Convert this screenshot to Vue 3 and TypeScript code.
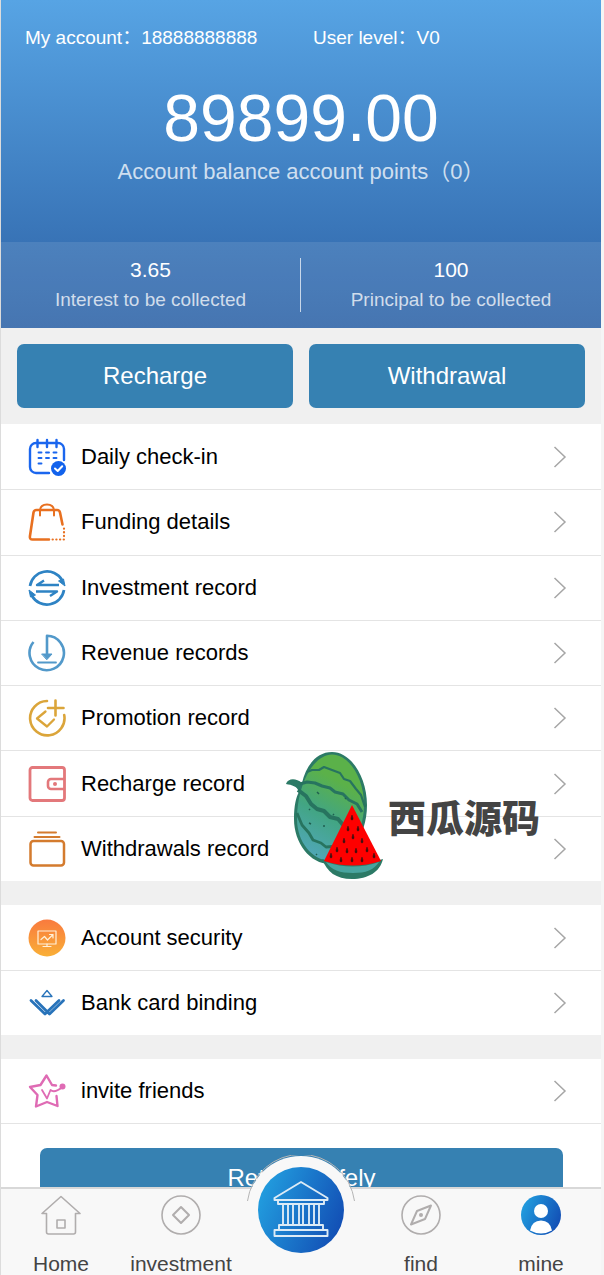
<script setup lang="ts">
interface MenuItem {
  id: string
  label: string
}

const stats = [
  { label: 'Interest to be collected', value: '3.65' },
  { label: 'Principal to be collected', value: '100' },
]

const groups: MenuItem[][] = [
  [
    { id: 'checkin', label: 'Daily check-in' },
    { id: 'funding', label: 'Funding details' },
    { id: 'investment', label: 'Investment record' },
    { id: 'revenue', label: 'Revenue records' },
    { id: 'promotion', label: 'Promotion record' },
    { id: 'recharge', label: 'Recharge record' },
    { id: 'withdrawals', label: 'Withdrawals record' },
  ],
  [
    { id: 'security', label: 'Account security' },
    { id: 'bank', label: 'Bank card binding' },
  ],
  [{ id: 'invite', label: 'invite friends' }],
]

const seeds = [
  [67, 67], [63, 78], [73, 78], [59, 90], [68, 86], [77, 90],
  [52, 99], [62, 100], [71, 100], [82, 99],
  [46, 105], [56, 109], [67, 109], [77, 109], [89, 105],
]
</script>

<template>
  <div class="app">
    <main class="scroll">
      <header class="hero">
        <div class="account">
          <span>My account：18888888888</span>
          <span>User level：V0</span>
        </div>
        <div class="balance">89899.00</div>
        <div class="caption">Account balance account points（0）</div>
        <div class="stats">
          <div v-for="s in stats" :key="s.label" class="stat">
            <strong>{{ s.value }}</strong>
            <span>{{ s.label }}</span>
          </div>
        </div>
      </header>

      <div class="actions">
        <button type="button" class="primary">Recharge</button>
        <button type="button" class="primary">Withdrawal</button>
      </div>

      <div class="menus">
        <nav v-for="(group, gi) in groups" :key="gi" class="menu" :class="'menu-' + gi">
          <a v-for="item in group" :key="item.id" href="#" class="row">
            <svg class="icon" viewBox="0 0 38 38" fill="none" stroke-linecap="round" stroke-linejoin="round">
              <g v-if="item.id === 'checkin'" stroke="#1b66ee" stroke-width="2.400">
                <path d="M21 35H8a6 6 0 0 1-6-6V11a6 6 0 0 1 6-6h22a6 6 0 0 1 6 6v11" />
                <path d="M9.500 2v7M19 2v7M28.500 2v7" />
                <path d="M10.500 14.500h3M18 14.500h3M25.500 14.500h3M10.500 20h3M18 20h3M25.500 20h3M10.500 25.500h3" stroke-width="1.900" />
                <circle cx="30.500" cy="30.500" r="7.500" fill="#1262ec" stroke="none" />
                <path d="M27 30.500l2.700 2.500 4.500-4.800" stroke="#fff" stroke-width="2" />
              </g>
              <g v-else-if="item.id === 'funding'" stroke="#e87020" stroke-width="2.600">
                <path d="M21 36.500H4.500q-3 0-2.600-3L5.500 9.500Q6 7 8.500 7h20.500q2.500 0 3 2.500l2.500 12" />
                <path d="M12 12.500V8q0-6.500 7-6.500T26 8v4.500" stroke-width="2" />
                <path d="M36 25.500v11H23.500" stroke-width="2.200" stroke-dasharray="0.200 3.500" />
              </g>
              <g v-else-if="item.id === 'investment'" stroke="#2e83c4" stroke-width="2.700" stroke-linecap="butt">
                <path d="M2 17A17.300 17.300 0 0 1 34 11M36 21A17.300 17.300 0 0 1 4 27" />
                <path d="M37 17l-6.500-5 5-2zM1 21l6.500 5-5 2z" fill="#2e83c4" stroke-width="1" />
                <path d="M31 16H9l7-4.500M8 22.500h21l-7 4.500" stroke-width="2.400" />
              </g>
              <g v-else-if="item.id === 'revenue'" stroke="#5299ca" stroke-width="2.600">
                <path d="M5.500 8A17.200 17.200 0 1 0 19 1.800V23" stroke-linecap="butt" />
                <path d="M14 20h10l-5 5.500z" fill="#5299ca" stroke-width="1" />
                <path d="M10 28.500h18" stroke-width="1.800" />
              </g>
              <g v-else-if="item.id === 'promotion'" stroke="#dba53a" stroke-width="2.600">
                <path d="M19 2A17.200 17.200 0 1 0 36.200 16" />
                <path d="M27.500 1.500v15M20 9h15.500" stroke-width="2.600" />
                <path d="M17.500 12.500L9 19.500l10 8 7-7" stroke-width="2.300" />
              </g>
              <g v-else-if="item.id === 'recharge'" stroke="#e3787b" stroke-width="2.800">
                <rect x="2" y="2.500" width="34.500" height="33" rx="2.500" />
                <path d="M36 14H23a3 3 0 0 0-3 3v4a3 3 0 0 0 3 3h13" stroke-width="2.600" />
                <circle cx="27" cy="19" r="2" fill="#e3787b" stroke="none" />
              </g>
              <g v-else-if="item.id === 'withdrawals'" stroke="#d47b2e" stroke-width="2">
                <rect x="2.500" y="11" width="33.500" height="24.500" rx="3" stroke-width="2.500" />
                <path d="M10 2.500h18M6.500 7h25" />
              </g>
              <g v-else-if="item.id === 'security'">
                <defs>
                  <linearGradient id="sun" x1="0" y1="0" x2="0" y2="1">
                    <stop offset="0" stop-color="#f97a3e" />
                    <stop offset="1" stop-color="#f9af37" />
                  </linearGradient>
                </defs>
                <circle cx="19" cy="19" r="18.500" fill="url(#sun)" />
                <g stroke="#fff0d9" stroke-width="1.200">
                  <rect x="10" y="12" width="18" height="13" />
                  <path d="M19 25v2.500M15 27.500h8M13 20.500l3.500-3 3 3.500 5.500-5.500M21.500 15.500H25V19" />
                </g>
              </g>
              <g v-else-if="item.id === 'bank'" stroke="#2873ba" stroke-width="2.800">
                <path d="M19 6.500l5 6H14z" stroke-width="1.300" />
                <path d="M3 16.500L17 30 31 16.500M8 16.500L21.500 30 35.500 16.500" />
              </g>
              <g v-else stroke="#df6bb4" stroke-width="2.400">
                <path d="M28.500 24l1 10L19 30 8 34.500 9.500 23 2 15l10.500-2L18.500 3.500l5.500 9.500 4 .5" />
                <path d="M14 18l5 8.500 3.500-8.500q4 3.500 12-3" stroke-width="1.800" />
                <circle cx="34.500" cy="14.500" r="3" fill="#df6bb4" stroke="none" />
              </g>
            </svg>
            <span class="label">{{ item.label }}</span>
            <svg class="chevron" viewBox="0 0 14 24" fill="none" stroke="#a6a6a6" stroke-width="1.500">
              <path d="M1.500 2L12 12 1.500 22" />
            </svg>
          </a>
        </nav>

        <div class="badge">
          <svg class="melon" viewBox="0 0 98 128">
            <defs>
              <linearGradient id="rind" x1="0.700" y1="0" x2="0.350" y2="1">
                <stop offset="0.250" stop-color="#5bb149" />
                <stop offset="0.600" stop-color="#42a583" />
                <stop offset="1" stop-color="#50a7b8" />
              </linearGradient>
            </defs>
            <path d="M47 1C66 1 82 26 82 54c0 32-20 58-37 59C25 113 9 92 9 68c0-13 2-22 5-27C12 35 7 34 1 33c2-6 10-6 16-1C21 15 31 1 47 1z" fill="#2c7a66" />
            <path d="M47 3.500C64 3.500 79 27 79 54c0 30-19 55-34 56C27 109 12 91 12 68 12 36 27 4 47 3.500z" fill="url(#rind)" />
            <g fill="none" stroke="#27745f" stroke-width="2.200" stroke-linejoin="round">
              <path d="M22 21l5-2 7 0 5-3 8 3 8 3 4 6 6 2 6 8 5 6 4 12" />
              <path d="M15 33l7-2 8 1 7 3 8 2 5 4 8 2 6 6 8 4 5 8" stroke-width="3" />
              <path d="M13 39l8 6 5 8 6 5 7 2 6 6 8 2 6 7" stroke-width="4" />
              <path d="M12 62l5 12 7 8 4 7 8 3 5 4 14-1" stroke-width="2.800" />
            </g>
            <path d="M32 41l2 2M48 63l1 1M24 58l1 1M38 75l2 0M24 72l2 1M60 47l1 1M31 103l1 1" stroke="#1f5f50" stroke-width="1.500" />
            <path d="M37 108q30 10 61 0c-3 13-15 20-31 20S42 121 37 108z" fill="#2c7a66" />
            <path d="M41 111q27 9 53 0c-5 8-13 11-26 11s-22-3-27-11z" fill="#49a49f" />
            <path d="M67 54l29 56q-28 9-57 0z" fill="#fe0000" />
            <path v-for="(s, i) in seeds" :key="i" :d="`M${s[0]} ${s[1] - 3}q-2 5 0 5t0-5z`" fill="#3a1010" stroke="#3a1010" stroke-width="0.500" />
          </svg>
          <span>西瓜源码</span>
        </div>
      </div>

      <div class="exit">
        <button type="button" class="primary">Retreat safely</button>
      </div>
    </main>

    <nav class="tabs">
      <a href="#" class="tab">
        <svg viewBox="0 0 40 40" fill="none" stroke="#b0adad" stroke-width="1.600" stroke-linejoin="round">
          <path d="M20 1.500L39 18.500H34.500V37a2 2 0 0 1-2 2h-25a2 2 0 0 1-2-2V18.500H1zM16 25h8v8h-8z" />
        </svg>
        <span>Home</span>
      </a>
      <a href="#" class="tab">
        <svg viewBox="0 0 40 40" fill="none" stroke="#b0adad" stroke-width="1.600" stroke-linejoin="round">
          <circle cx="20" cy="20" r="19" />
          <path d="M20 12l8 8-8 8-8-8z" stroke-width="2" />
        </svg>
        <span>investment</span>
      </a>
      <a href="#" class="tab" aria-label="Bank">
        <svg class="hub" viewBox="0 0 110 110" fill="none">
          <defs>
            <linearGradient id="sea" x1="0" y1="0.300" x2="1" y2="0.700">
              <stop offset="0" stop-color="#229edf" />
              <stop offset="1" stop-color="#124db4" />
            </linearGradient>
          </defs>
          <circle cx="55" cy="55" r="54" fill="#f8f8f8" />
          <path d="M1.500 46A54 54 0 0 1 108.500 46" stroke="#b5b5b5" />
          <circle cx="55" cy="55" r="43" fill="url(#sea)" />
          <g stroke="#dcebf6" stroke-width="1.900" stroke-linejoin="round">
            <path d="M55 27L28.500 43v2h53v-2zM32 45v4h46v-4M37 49v21M42 49v21M47 49v21M53 49v21M57 49v21M63 49v21M68 49v21M73 49v21" />
            <path d="M33 70h44v5H33zM28.500 75h53v6h-53z" />
          </g>
        </svg>
      </a>
      <a href="#" class="tab">
        <svg viewBox="0 0 40 40" fill="none" stroke="#b0adad" stroke-width="1.600" stroke-linejoin="round">
          <circle cx="20" cy="20" r="19" />
          <path d="M30 10.500L24 24 10 29.500 16 16z" stroke-width="2" />
          <circle cx="20" cy="20" r="2" fill="#b0adad" stroke="none" />
        </svg>
        <span>find</span>
      </a>
      <a href="#" class="tab">
        <svg viewBox="0 0 40 40">
          <circle cx="20" cy="20" r="20" fill="url(#sea)" />
          <circle cx="20" cy="16" r="7" fill="#fff" />
          <path d="M9 35.500q2-10 11-10t11 10q-11 6-22 0z" fill="#fff" />
        </svg>
        <span>mine</span>
      </a>
    </nav>
  </div>
</template>

<style>
body {
  margin: 0;
  background: #f5f5f5;
}
</style>

<style scoped>
.app {
  box-sizing: border-box;
  display: flex;
  flex-direction: column;
  height: 100vh;
  margin-right: 3px;
  border-left: 1px solid #dcdcdc;
  background: #f0f0f0;
  font-family: "Liberation Sans", "Noto Sans CJK SC", sans-serif;
  color: #000;
}
a {
  color: inherit;
  text-decoration: none;
}
.scroll {
  display: flex;
  flex-direction: column;
  flex: 1;
  min-height: 0;
  overflow-y: auto;
  scrollbar-width: none;
}
.scroll > * {
  flex-shrink: 0;
}
.hero {
  background: linear-gradient(#57a4e4, #3873b6 74%, #3266a9);
  color: #fff;
  text-align: center;
}
.account {
  display: grid;
  grid-template-columns: 1fr 1fr;
  padding: 24px 0 0 24px;
  font-size: 19px;
  line-height: 28px;
  text-align: left;
}
.account span {
  white-space: nowrap;
}
.balance {
  margin-top: 28px;
  font-size: 66px;
  line-height: 76px;
}
.caption {
  margin-bottom: 54px;
  font-size: 22px;
  line-height: 32px;
  color: rgba(255, 255, 255, 0.75);
}
.stats {
  display: grid;
  grid-template-columns: 1fr 1fr;
  padding: 16px 0;
  background: rgba(255, 255, 255, 0.1);
}
.stat {
  display: flex;
  flex-direction: column;
  gap: 6px;
  line-height: 24px;
}
.stat:first-child {
  border-right: 1px solid rgba(255, 255, 255, 0.7);
}
.stat strong {
  font-size: 21px;
  font-weight: 400;
}
.stat span {
  font-size: 19px;
  color: rgba(255, 255, 255, 0.75);
}
.actions {
  display: grid;
  grid-template-columns: 1fr 1fr;
  gap: 16px;
  padding: 16px;
}
.primary {
  height: 64px;
  border: 0;
  border-radius: 7px;
  background: #3681b2;
  color: #fff;
  font: inherit;
  font-size: 24px;
}
.menus {
  position: relative;
  display: grid;
  gap: 24px;
}
.menu {
  display: grid;
  grid-auto-rows: 1fr;
  background: #fff;
}
.menu-0 {
  min-height: 457px;
}
.row {
  box-sizing: border-box;
  display: flex;
  align-items: center;
  min-height: 65px;
  padding: 0 34px 0 27px;
  font-size: 22px;
}
.row + .row {
  border-top: 1px solid #e4e4e4;
}
.menu-2 .row {
  border-bottom: 1px solid #e4e4e4;
}
.icon {
  width: 38px;
  height: 38px;
  margin-right: 15px;
}
.label {
  flex: 1;
}
.chevron {
  width: 14px;
  height: 24px;
}
.badge {
  position: absolute;
  top: 327px;
  left: 284px;
  display: flex;
  align-items: center;
  gap: 5px;
  color: #444;
  font-family: "Noto Sans CJK SC", sans-serif;
  font-size: 38px;
  font-weight: 900;
  pointer-events: none;
}
.melon {
  width: 98px;
  height: 128px;
}
.exit {
  display: grid;
  padding: 24px 38px 24px 39px;
  background: #fff;
}
.exit .primary {
  height: 60px;
}
.tabs {
  box-sizing: border-box;
  display: grid;
  grid-template-columns: repeat(5, 1fr);
  height: 88px;
  border-top: 2px solid #d8d8d8;
  background: #f8f8f8;
  color: #444;
}
.tab {
  position: relative;
  display: flex;
  flex-direction: column;
  align-items: center;
  gap: 17px;
  padding-top: 6px;
  font-size: 21px;
  line-height: 24px;
}
.tab svg {
  width: 40px;
  height: 40px;
  flex-shrink: 0;
}
.tab .hub {
  position: absolute;
  top: -34px;
  left: calc(50% - 55px);
  width: 110px;
  height: 110px;
}
</style>
